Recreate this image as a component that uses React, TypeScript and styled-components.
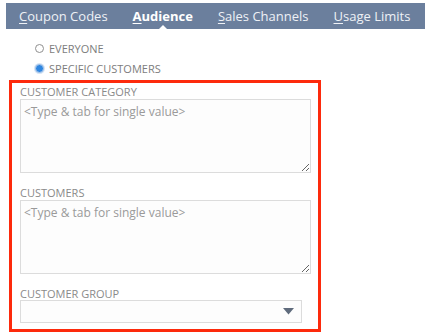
import React from 'react';
import styled, { createGlobalStyle } from 'styled-components';

const GlobalStyle = createGlobalStyle`
	html, body {
		margin: 0;
		padding: 0;
		background: #ffffff;
	}
	body {
		font-family: "Open Sans", "Liberation Sans", Arial, sans-serif;
	}
`;

const Page = styled.div`
	width: 425px;
	height: 335px;
	padding-top: 3px;
	box-sizing: border-box;
	overflow: hidden;
	background: #fff;
`;

const TabBar = styled.div`
	margin-left: 6px;
	height: 26px;
	background: #6b7f9d;
	display: flex;
	align-items: center;
	gap: 25px;
	padding-left: 13px;
`;

const Tab = styled.div<{ $active?: boolean }>`
	position: relative;
	height: 26px;
	line-height: 26px;
	font-size: 13px;
	white-space: nowrap;
	color: ${p => (p.$active ? '#ffffff' : '#eef1f6')};
	font-weight: ${p => (p.$active ? 700 : 400)};
	u {
		text-decoration-thickness: 1px;
		text-underline-offset: 2px;
	}
	${p => p.$active && `
		&::after {
			content: '';
			position: absolute;
			left: 50%;
			bottom: 0;
			margin-left: -4px;
			border-left: 4px solid transparent;
			border-right: 4px solid transparent;
			border-bottom: 4px solid #ffffff;
		}
	`}
`;

const RadioGroup = styled.div`
	padding: 10px 0 0 35px;
	display: flex;
	flex-direction: column;
	gap: 2px;
`;

const RadioRow = styled.label`
	display: flex;
	align-items: center;
	gap: 5px;
	height: 18px;
	font-size: 11px;
	color: #7d7d7d;
	text-transform: uppercase;
`;

const RadioDot = styled.span<{ $checked?: boolean }>`
	width: 9px;
	height: 9px;
	border-radius: 50%;
	box-sizing: border-box;
	border: 1px solid ${p => (p.$checked ? '#a9c6ea' : '#8f8f8f')};
	background: ${p => (p.$checked ? '#2f86e0' : '#ffffff')};
	box-shadow: ${p => (p.$checked ? '0 0 0 1px #d6e4f4' : 'none')};
`;

const Highlight = styled.div`
	margin: 3px 0 0 9px;
	width: 312px;
	height: 252px;
	box-sizing: border-box;
	border: 3px solid #fd2a0c;
	padding: 3px 0 0 8px;
	display: flex;
	flex-direction: column;
`;

const Label = styled.div`
	font-size: 11px;
	line-height: 12px;
	color: #8a8a8a;
	text-transform: uppercase;
`;

const Field = styled.div`
	display: flex;
	flex-direction: column;
	margin-bottom: 14px;
`;

const Area = styled.textarea`
	width: 291px;
	height: 74px;
	box-sizing: border-box;
	margin: 1px 0 0 0;
	border: 1px solid #dcdcdc;
	background: #fdfdfd;
	padding: 3px 3px;
	font-family: "Open Sans", "Liberation Sans", Arial, sans-serif;
	font-size: 12px;
	color: #555;
	outline: none;
	resize: vertical;
	&::placeholder {
		color: #9a9a9a;
		opacity: 1;
	}
`;

const Select = styled.div`
	width: 282px;
	height: 23px;
	box-sizing: border-box;
	border: 1px solid #dcdcdc;
	background: #fdfdfd;
	display: flex;
	align-items: center;
	justify-content: flex-end;
	padding-right: 7px;
`;

const Caret = () => (
	<svg width="11" height="7" viewBox="0 0 11 7">
		<path d="M0 0 H11 L5.5 6.5 Z" fill="#5f6b7c" />
	</svg>
);

const App = () => {
	return (
		<>
			<GlobalStyle />
			<Page>
				<TabBar>
					<Tab><u>C</u>oupon Codes</Tab>
					<Tab $active><u>A</u>udience</Tab>
					<Tab><u>S</u>ales Channels</Tab>
					<Tab><u>U</u>sage Limits</Tab>
				</TabBar>
				<RadioGroup>
					<RadioRow><RadioDot />Everyone</RadioRow>
					<RadioRow><RadioDot $checked />Specific Customers</RadioRow>
				</RadioGroup>
				<Highlight>
					<Field>
						<Label>Customer Category</Label>
						<Area placeholder="<Type & tab for single value>" />
					</Field>
					<Field>
						<Label>Customers</Label>
						<Area placeholder="<Type & tab for single value>" />
					</Field>
					<Field>
						<Label>Customer Group</Label>
						<Select><Caret /></Select>
					</Field>
				</Highlight>
			</Page>
		</>
	);
};

export default App;
